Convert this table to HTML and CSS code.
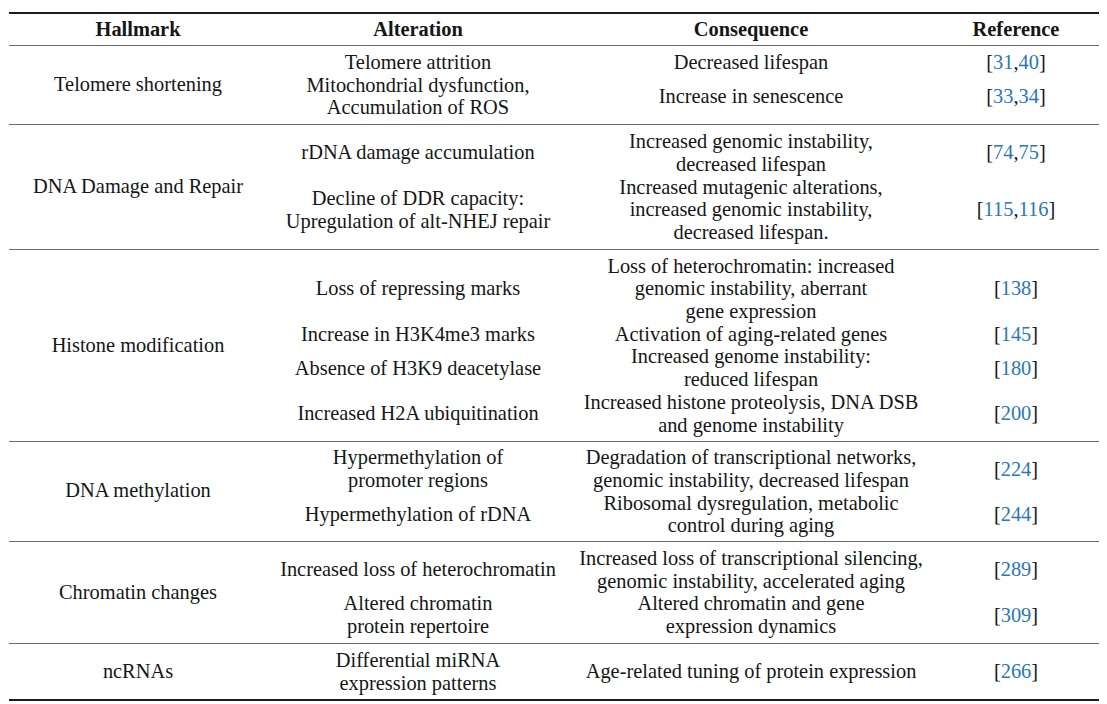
FILE: index.html
```html
<!DOCTYPE html>
<html lang="en">
<head>
<meta charset="utf-8">
<title>Hallmarks table</title>
<link rel="stylesheet" href="styles.css">
</head>
<body>
<table class="hallmarks">
  <colgroup>
    <col class="c1"><col class="c2"><col class="c3"><col class="c4">
  </colgroup>
  <thead>
    <tr><th>Hallmark</th><th>Alteration</th><th>Consequence</th><th>Reference</th></tr>
  </thead>
  <tbody class="group">
    <tr>
      <td class="hallmark" rowspan="2">Telomere shortening</td>
      <td>Telomere attrition</td>
      <td>Decreased lifespan</td>
      <td>[<a>31</a>,<a>40</a>]</td>
    </tr>
    <tr>
      <td>Mitochondrial dysfunction,<br>Accumulation of ROS</td>
      <td>Increase in senescence</td>
      <td>[<a>33</a>,<a>34</a>]</td>
    </tr>
  </tbody>
  <tbody class="group">
    <tr>
      <td class="hallmark" rowspan="2">DNA Damage and Repair</td>
      <td>rDNA damage accumulation</td>
      <td>Increased genomic instability,<br>decreased lifespan</td>
      <td>[<a>74</a>,<a>75</a>]</td>
    </tr>
    <tr>
      <td>Decline of DDR capacity:<br>Upregulation of alt-NHEJ repair</td>
      <td>Increased mutagenic alterations,<br>increased genomic instability,<br>decreased lifespan.</td>
      <td>[<a>115</a>,<a>116</a>]</td>
    </tr>
  </tbody>
  <tbody class="group">
    <tr>
      <td class="hallmark" rowspan="4">Histone modification</td>
      <td>Loss of repressing marks</td>
      <td>Loss of heterochromatin: increased<br>genomic instability, aberrant<br>gene expression</td>
      <td>[<a>138</a>]</td>
    </tr>
    <tr>
      <td>Increase in H3K4me3 marks</td>
      <td>Activation of aging-related genes</td>
      <td>[<a>145</a>]</td>
    </tr>
    <tr>
      <td>Absence of H3K9 deacetylase</td>
      <td>Increased genome instability:<br>reduced lifespan</td>
      <td>[<a>180</a>]</td>
    </tr>
    <tr>
      <td>Increased H2A ubiquitination</td>
      <td>Increased histone proteolysis, DNA DSB<br>and genome instability</td>
      <td>[<a>200</a>]</td>
    </tr>
  </tbody>
  <tbody class="group compact">
    <tr>
      <td class="hallmark" rowspan="2">DNA methylation</td>
      <td>Hypermethylation of<br>promoter regions</td>
      <td>Degradation of transcriptional networks,<br>genomic instability, decreased lifespan</td>
      <td>[<a>224</a>]</td>
    </tr>
    <tr>
      <td>Hypermethylation of rDNA</td>
      <td>Ribosomal dysregulation, metabolic<br>control during aging</td>
      <td>[<a>244</a>]</td>
    </tr>
  </tbody>
  <tbody class="group">
    <tr>
      <td class="hallmark" rowspan="2">Chromatin changes</td>
      <td>Increased loss of heterochromatin</td>
      <td>Increased loss of transcriptional silencing,<br>genomic instability, accelerated aging</td>
      <td>[<a>289</a>]</td>
    </tr>
    <tr>
      <td>Altered chromatin<br>protein repertoire</td>
      <td>Altered chromatin and gene<br>expression dynamics</td>
      <td>[<a>309</a>]</td>
    </tr>
  </tbody>
  <tbody class="group last">
    <tr>
      <td class="hallmark">ncRNAs</td>
      <td>Differential miRNA<br>expression patterns</td>
      <td>Age-related tuning of protein expression</td>
      <td>[<a>266</a>]</td>
    </tr>
  </tbody>
</table>
</body>
</html>
```

FILE: styles.css
```css
html, body {
  margin: 0;
  padding: 0;
  background: #ffffff;
}

body {
  font-family: "Liberation Serif", "Times New Roman", serif;
  font-size: 20.4px;
  color: #161616;
}

.hallmarks {
  margin: 12px 0 0 9px;
  width: 1090px;
  border-collapse: collapse;
  table-layout: fixed;
  border-top: 2px solid #1c1c1c;
  border-bottom: 2px solid #1c1c1c;
}

.c1 { width: 258px; }
.c2 { width: 302px; }
.c3 { width: 364px; }
.c4 { width: 166px; }

.hallmarks th,
.hallmarks td {
  text-align: center;
  vertical-align: middle;
  white-space: nowrap;
  padding: 0;
  line-height: 22.7px;
}

.hallmarks th {
  font-weight: bold;
  padding: 4px 0 4px;
  line-height: 23px;
}

.hallmarks thead {
  border-bottom: 1px solid #6a6a6a;
}

.group {
  border-bottom: 1px solid #6a6a6a;
}

.group.last {
  border-bottom: 2px solid #1c1c1c;
}

.group tr:first-child td {
  padding-top: 5px;
}

.group tr:last-child td {
  padding-bottom: 5px;
}

.group.compact tr:first-child td {
  padding-top: 4px;
}

.group.compact tr:last-child td {
  padding-bottom: 4px;
}

.group td.hallmark {
  padding: 0 0 6px;
}

.hallmarks a {
  color: #2a78b4;
  text-decoration: none;
}
```
